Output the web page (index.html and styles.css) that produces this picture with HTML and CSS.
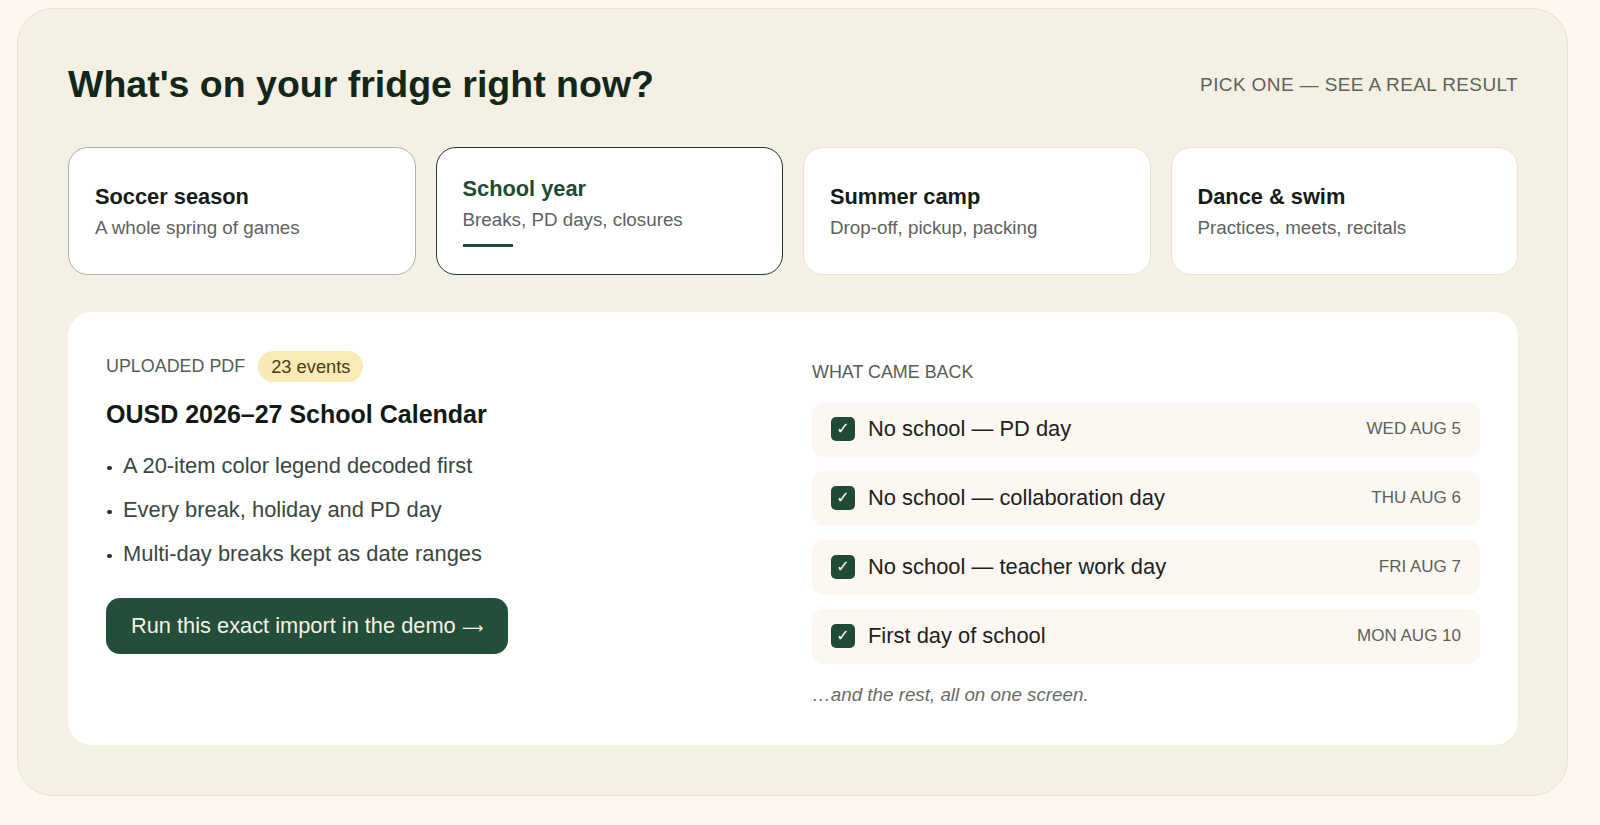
FILE: index.html
```html
<!DOCTYPE html>
<html lang="en">
<head>
<meta charset="utf-8">
<title>What's on your fridge right now?</title>
<link rel="stylesheet" href="styles.css">
</head>
<body>
<section class="panel">
  <header class="head">
    <h1 class="title">What's on your fridge right now?</h1>
    <div class="pick">PICK ONE — SEE A REAL RESULT</div>
  </header>

  <div class="cards">
    <div class="card card-hover">
      <div class="card-title">Soccer season</div>
      <div class="card-sub">A whole spring of games</div>
    </div>
    <div class="card card-active">
      <div class="card-title">School year</div>
      <div class="card-sub">Breaks, PD days, closures</div>
      <div class="card-bar"></div>
    </div>
    <div class="card">
      <div class="card-title">Summer camp</div>
      <div class="card-sub">Drop-off, pickup, packing</div>
    </div>
    <div class="card">
      <div class="card-title">Dance &amp; swim</div>
      <div class="card-sub">Practices, meets, recitals</div>
    </div>
  </div>

  <div class="result">
    <div class="left">
      <div class="meta">
        <span class="label">UPLOADED PDF</span>
        <span class="badge">23 events</span>
      </div>
      <h2 class="doc">OUSD 2026–27 School Calendar</h2>
      <ul class="bullets">
        <li>A 20-item color legend decoded first</li>
        <li>Every break, holiday and PD day</li>
        <li>Multi-day breaks kept as date ranges</li>
      </ul>
      <a class="btn" href="#">Run this exact import in the demo <span class="arrow">⟶</span></a>
    </div>
    <div class="right">
      <div class="label label-right">WHAT CAME BACK</div>
      <div class="rows">
        <div class="row"><span class="check">✓</span><span class="row-text">No school — PD day</span><span class="date">WED AUG 5</span></div>
        <div class="row"><span class="check">✓</span><span class="row-text">No school — collaboration day</span><span class="date">THU AUG 6</span></div>
        <div class="row"><span class="check">✓</span><span class="row-text">No school — teacher work day</span><span class="date">FRI AUG 7</span></div>
        <div class="row"><span class="check">✓</span><span class="row-text">First day of school</span><span class="date">MON AUG 10</span></div>
      </div>
      <p class="more">…and the rest, all on one screen.</p>
    </div>
  </div>
</section>
</body>
</html>
```

FILE: styles.css
```css
* { box-sizing: border-box; }

html, body {
  margin: 0;
  padding: 0;
}

body {
  background: #fdf7ef;
  font-family: "Liberation Sans", Arial, Helvetica, sans-serif;
  color: #1b211d;
  padding-top: 8px;
}

.panel {
  margin: 0 32px 0 17px;
  background: #f4f0e4;
  border: 1px solid #e6e1d3;
  border-radius: 36px;
  padding: 53px 49px 50px 50px;
}

.head {
  display: flex;
  justify-content: space-between;
  align-items: center;
}

.title {
  margin: 0;
  font-size: 37.5px;
  line-height: 45px;
  font-weight: 700;
  color: #13261a;
}

.pick {
  font-size: 19px;
  line-height: 23px;
  letter-spacing: 0.02em;
  color: #5c6358;
}

.cards {
  display: grid;
  grid-template-columns: repeat(4, 1fr);
  gap: 20px;
  margin-top: 40px;
}

.card {
  background: #ffffff;
  border: 1px solid #e9e3d2;
  border-radius: 20px;
  padding: 28px 26px 26.5px;
  display: flex;
  flex-direction: column;
  justify-content: center;
  min-height: 127.5px;
}

.card-hover { border-color: #a7b5a6; }
.card-active { border: 1.5px solid #1e3b2b; }

.card-title {
  font-size: 21.8px;
  line-height: 26px;
  font-weight: 700;
  color: #141c17;
}

.card-active .card-title { color: #1f4a33; }

.card-sub {
  margin-top: 6px;
  font-size: 18.8px;
  line-height: 24px;
  color: #5f625e;
}

.card-bar {
  margin-top: 12px;
  width: 50px;
  height: 3px;
  background: #1f4a33;
}

.result {
  margin-top: 37px;
  background: #ffffff;
  border-radius: 24px;
  padding: 39px 38px 38px;
  display: grid;
  grid-template-columns: 1fr 1fr;
  gap: 38px;
}

.meta {
  display: flex;
  align-items: center;
  gap: 13px;
}

.label {
  font-size: 17.9px;
  line-height: 21px;
  color: #585c57;
}

.badge {
  background: #f8ebb6;
  color: #4b3e14;
  font-size: 18.3px;
  line-height: 21px;
  padding: 5px 13px;
  border-radius: 16px;
}

.doc {
  margin: 17px 0 0;
  font-size: 25px;
  line-height: 30px;
  font-weight: 700;
  color: #101914;
}

.bullets {
  list-style: none;
  margin: 21px 0 0;
  padding: 0;
}

.bullets li {
  position: relative;
  padding-left: 17px;
  font-size: 21.9px;
  line-height: 32px;
  color: #39473e;
}

.bullets li + li { margin-top: 12px; }

.bullets li::before {
  content: "";
  position: absolute;
  left: 1px;
  top: 16px;
  width: 4.5px;
  height: 4.5px;
  border-radius: 50%;
  background: #1f3a2b;
}

.btn {
  display: inline-block;
  margin-top: 28px;
  padding: 15px 25px;
  background: #234e3a;
  color: #f7f1e6;
  border-radius: 14px;
  font-size: 21.8px;
  line-height: 26px;
  text-decoration: none;
}

.arrow {
  font-family: "DejaVu Sans", sans-serif;
  font-size: 15px;
  line-height: 0;
}

.right { padding-top: 11px; }

.label-right { margin-bottom: 19px; }

.rows {
  display: flex;
  flex-direction: column;
  gap: 14px;
}

.row {
  display: flex;
  align-items: center;
  height: 55px;
  padding: 0 19px;
  background: #fcf8f1;
  border-radius: 12px;
}

.check {
  flex: none;
  width: 24px;
  height: 24px;
  border-radius: 5px;
  background: #1f4a35;
  color: #ffffff;
  font-family: "DejaVu Sans", sans-serif;
  font-weight: 700;
  font-size: 16px;
  line-height: 24px;
  text-align: center;
  margin-right: 13px;
}

.row-text {
  font-size: 21.9px;
  line-height: 26px;
  color: #1d211e;
}

.date {
  margin-left: auto;
  font-size: 17px;
  line-height: 20px;
  color: #5d615b;
}

.more {
  margin: 19px 0 0;
  font-size: 18.8px;
  line-height: 24px;
  font-style: italic;
  color: #6a6b66;
}
```
